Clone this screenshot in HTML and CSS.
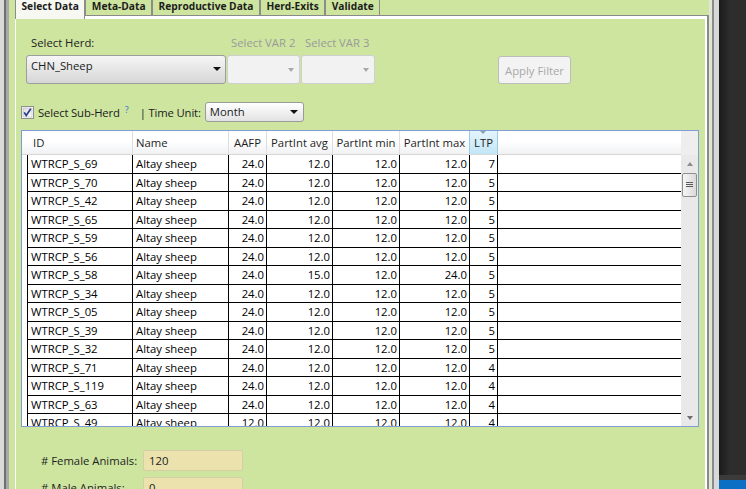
FILE: index.html
```html
<!DOCTYPE html>
<html>
<head>
<meta charset="utf-8">
<link rel="stylesheet" href="styles.css">
</head>
<body>
<div class="screen">
  <div class="frame-left"></div>
  <div class="app">
    <div class="tabs">
      <div class="tab active">Select Data</div>
      <div class="tab">Meta-Data</div>
      <div class="tab">Reproductive Data</div>
      <div class="tab">Herd-Exits</div>
      <div class="tab">Validate</div>
    </div>
    <div class="panel">
      <div class="filter-row">
        <div class="field field-herd">
          <div class="label label-herd">Select Herd:</div>
          <div class="combo combo-main"><span class="combo-text">CHN_Sheep</span><span class="arrow"></span></div>
        </div>
        <div class="field field-var2">
          <div class="label label-muted">Select VAR 2</div>
          <div class="combo combo-disabled"><span class="arrow arrow-light"></span></div>
        </div>
        <div class="field field-var3">
          <div class="label label-muted">Select VAR 3</div>
          <div class="combo combo-disabled"><span class="arrow arrow-light"></span></div>
        </div>
        <div class="btn-apply">Apply Filter</div>
      </div>

      <div class="sub-row">
        <svg class="checkbox" width="13" height="13" viewBox="0 0 13 13">
          <defs>
            <linearGradient id="cbg" x1="0" y1="0" x2="1" y2="1">
              <stop offset="0" stop-color="#dcdcdc"/>
              <stop offset="1" stop-color="#ffffff"/>
            </linearGradient>
          </defs>
          <rect x="0.5" y="0.5" width="12" height="12" fill="#fff" stroke="#8e8f8f"/>
          <rect x="2" y="2" width="9" height="9" fill="url(#cbg)" stroke="#b5b5b5" stroke-width="0.6"/>
          <path d="M3.2 6.4 L5.2 9.4 L9.8 2.8" fill="none" stroke="#2a3c8c" stroke-width="1.7"/>
        </svg>
        <span class="sub-label">Select Sub-Herd</span>
        <span class="help">?</span>
        <span class="time-label">| Time Unit:</span>
        <div class="combo combo-month"><span class="combo-text">Month</span><span class="arrow"></span></div>
      </div>

      <div class="table">
        <div class="grid">
          <div class="thead">
            <div class="th th-id">ID</div>
            <div class="th">Name</div>
            <div class="th th-num">AAFP</div>
            <div class="th th-num">PartInt avg</div>
            <div class="th th-num">PartInt min</div>
            <div class="th th-num">PartInt max</div>
            <div class="th th-num th-sorted">LTP</div>
            <div class="th th-fill"></div>
          </div>
          <div class="tbody">
            <div class="tr"><div class="gut"></div><div class="td">WTRCP_S_69</div><div class="td">Altay sheep</div><div class="td num">24.0</div><div class="td num">12.0</div><div class="td num">12.0</div><div class="td num">12.0</div><div class="td num">7</div><div class="td fill"></div></div>
            <div class="tr"><div class="gut"></div><div class="td">WTRCP_S_70</div><div class="td">Altay sheep</div><div class="td num">24.0</div><div class="td num">12.0</div><div class="td num">12.0</div><div class="td num">12.0</div><div class="td num">5</div><div class="td fill"></div></div>
            <div class="tr"><div class="gut"></div><div class="td">WTRCP_S_42</div><div class="td">Altay sheep</div><div class="td num">24.0</div><div class="td num">12.0</div><div class="td num">12.0</div><div class="td num">12.0</div><div class="td num">5</div><div class="td fill"></div></div>
            <div class="tr"><div class="gut"></div><div class="td">WTRCP_S_65</div><div class="td">Altay sheep</div><div class="td num">24.0</div><div class="td num">12.0</div><div class="td num">12.0</div><div class="td num">12.0</div><div class="td num">5</div><div class="td fill"></div></div>
            <div class="tr"><div class="gut"></div><div class="td">WTRCP_S_59</div><div class="td">Altay sheep</div><div class="td num">24.0</div><div class="td num">12.0</div><div class="td num">12.0</div><div class="td num">12.0</div><div class="td num">5</div><div class="td fill"></div></div>
            <div class="tr"><div class="gut"></div><div class="td">WTRCP_S_56</div><div class="td">Altay sheep</div><div class="td num">24.0</div><div class="td num">12.0</div><div class="td num">12.0</div><div class="td num">12.0</div><div class="td num">5</div><div class="td fill"></div></div>
            <div class="tr"><div class="gut"></div><div class="td">WTRCP_S_58</div><div class="td">Altay sheep</div><div class="td num">24.0</div><div class="td num">15.0</div><div class="td num">12.0</div><div class="td num">24.0</div><div class="td num">5</div><div class="td fill"></div></div>
            <div class="tr"><div class="gut"></div><div class="td">WTRCP_S_34</div><div class="td">Altay sheep</div><div class="td num">24.0</div><div class="td num">12.0</div><div class="td num">12.0</div><div class="td num">12.0</div><div class="td num">5</div><div class="td fill"></div></div>
            <div class="tr"><div class="gut"></div><div class="td">WTRCP_S_05</div><div class="td">Altay sheep</div><div class="td num">24.0</div><div class="td num">12.0</div><div class="td num">12.0</div><div class="td num">12.0</div><div class="td num">5</div><div class="td fill"></div></div>
            <div class="tr"><div class="gut"></div><div class="td">WTRCP_S_39</div><div class="td">Altay sheep</div><div class="td num">24.0</div><div class="td num">12.0</div><div class="td num">12.0</div><div class="td num">12.0</div><div class="td num">5</div><div class="td fill"></div></div>
            <div class="tr"><div class="gut"></div><div class="td">WTRCP_S_32</div><div class="td">Altay sheep</div><div class="td num">24.0</div><div class="td num">12.0</div><div class="td num">12.0</div><div class="td num">12.0</div><div class="td num">5</div><div class="td fill"></div></div>
            <div class="tr"><div class="gut"></div><div class="td">WTRCP_S_71</div><div class="td">Altay sheep</div><div class="td num">24.0</div><div class="td num">12.0</div><div class="td num">12.0</div><div class="td num">12.0</div><div class="td num">4</div><div class="td fill"></div></div>
            <div class="tr"><div class="gut"></div><div class="td">WTRCP_S_119</div><div class="td">Altay sheep</div><div class="td num">24.0</div><div class="td num">12.0</div><div class="td num">12.0</div><div class="td num">12.0</div><div class="td num">4</div><div class="td fill"></div></div>
            <div class="tr"><div class="gut"></div><div class="td">WTRCP_S_63</div><div class="td">Altay sheep</div><div class="td num">24.0</div><div class="td num">12.0</div><div class="td num">12.0</div><div class="td num">12.0</div><div class="td num">4</div><div class="td fill"></div></div>
            <div class="tr"><div class="gut"></div><div class="td">WTRCP_S_49</div><div class="td">Altay sheep</div><div class="td num">12.0</div><div class="td num">12.0</div><div class="td num">12.0</div><div class="td num">12.0</div><div class="td num">4</div><div class="td fill"></div></div>
          </div>
        </div>
        <div class="vscroll">
          <div class="vs-head"></div>
          <div class="vs-btn"><span class="tri-up"></span></div>
          <div class="vs-thumb">
            <svg width="7" height="6" viewBox="0 0 7 6"><path d="M0 0.5H7M0 2.5H7M0 4.5H7" stroke="#5a5a5a" stroke-width="1"/></svg>
          </div>
          <div class="vs-track"></div>
          <div class="vs-btn"><span class="tri-down"></span></div>
        </div>
      </div>

      <div class="stat-row stat-first">
        <span class="stat-label"># Female Animals:</span>
        <div class="stat-box">120</div>
      </div>
      <div class="stat-row">
        <span class="stat-label"># Male Animals:</span>
        <div class="stat-box">0</div>
      </div>
    </div>
  </div>
  <div class="frame-right"></div>
  <div class="desk">
    <div class="taskbar"></div>
  </div>
</div>
</body>
</html>
```
FILE: styles.css
```css
html, body {
  margin: 0;
  padding: 0;
}
body {
  font-family: "Open Sans", "Noto Sans", sans-serif;
  font-size: 11.3px;
  color: #1b1b1b;
  background: #2a2a2a;
}
.screen {
  display: flex;
  width: 746px;
  height: 489px;
  overflow: hidden;
}
.frame-left {
  width: 10px;
  flex: none;
  background: linear-gradient(to right, #dadada 0 4px, #6f6f6f 4px 6px, #a9a9a9 6px 9px, #cee5a0 9px);
}
.app {
  width: 699px;
  flex: none;
  box-sizing: border-box;
  padding-left: 5px;
  background: #cee5a0;
  display: flex;
  flex-direction: column;
}
.frame-right {
  width: 10px;
  flex: none;
  background: linear-gradient(to right, #dfe6d6 0 3px, #8b8b8b 3px 5px, #d8d8d8 5px);
}
.desk {
  flex: 1;
  background: linear-gradient(to right, #1b1b1b, #2d2d2d 11px);
  display: flex;
  flex-direction: column;
  justify-content: flex-end;
}
.taskbar {
  height: 9px;
  border-top: 5px solid #3b3b3b;
  background: #0b6fc4;
}

/* tabs */
.tabs {
  display: flex;
  height: 15px;
  flex: none;
}
.tab {
  height: 15px;
  box-sizing: border-box;
  padding: 0 5.5px;
  border-left: 1px solid #8c8c8c;
  border-right: 1px solid #8c8c8c;
  font-weight: bold;
  font-size: 10.2px;
  line-height: 13px;
  color: #1c1c1c;
  white-space: nowrap;
}
.tab.active {
  position: relative;
  z-index: 1;
  height: 19px;
  background: #f6f8f1;
}

/* panel */
.panel {
  flex: 1;
  border-top: 1px solid #8a8a8a;
  border-right: 2px solid #8a8a8a;
  box-shadow: inset 1px 3px 0 #fff, inset -2px 0 0 #fff;
  padding: 19px 0 0 6px;
  display: flex;
  flex-direction: column;
}
.filter-row {
  display: flex;
  align-items: flex-end;
  height: 49px;
}
.field {
  display: flex;
  flex-direction: column;
}
.field-herd {
  margin-left: 5px;
  width: 200px;
}
.field-var2 {
  margin-left: 1px;
  width: 73px;
}
.field-var3 {
  margin-left: 1px;
  width: 74px;
}
.label {
  height: 16px;
  line-height: 16px;
  margin-bottom: 4px;
  white-space: nowrap;
  padding-left: 4px;
}
.label-herd {
  padding-left: 5px;
  color: #222;
}
.label-muted {
  color: #9a9a9a;
}
.combo {
  box-sizing: border-box;
  display: flex;
  justify-content: space-between;
  border-radius: 3px;
}
.combo-main {
  height: 29px;
  border: 1px solid #9d9d9d;
  background: linear-gradient(to bottom, #f6f6f6, #d6d6d6);
  padding: 2px 4px 0 4px;
  line-height: 16px;
}
.combo-main .arrow {
  margin-top: 9px;
}
.combo-disabled {
  height: 29px;
  border: 1px solid #cfcfcf;
  background: #f2f2f2;
  justify-content: flex-end;
  padding: 0 5px;
}
.combo-disabled .arrow {
  margin-top: 12px;
}
.arrow {
  width: 0;
  height: 0;
  border-left: 4px solid transparent;
  border-right: 4px solid transparent;
  border-top: 4px solid #111;
}
.arrow-light {
  border-left-width: 3.5px;
  border-right-width: 3.5px;
  border-top-color: #a8a8a8;
}
.btn-apply {
  margin-left: 123px;
  width: 73px;
  height: 28px;
  box-sizing: border-box;
  border: 1px solid #bcbcbc;
  border-radius: 3px;
  background: #f3f3f3;
  color: #a8a8a8;
  display: flex;
  align-items: center;
  justify-content: center;
  white-space: nowrap;
}

/* sub-herd row */
.sub-row {
  margin-top: 18px;
  height: 20px;
  display: flex;
  align-items: center;
}
.checkbox {
  flex: none;
}
.sub-label {
  margin-left: 4px;
  letter-spacing: -0.15px;
}
.help {
  margin-left: 5px;
  font-size: 9px;
  color: #3a6fd8;
  align-self: flex-start;
  margin-top: 1px;
}
.time-label {
  margin-left: 11px;
  letter-spacing: -0.15px;
}
.combo-month {
  margin-left: 4px;
  width: 99px;
  height: 20px;
  border: 1px solid #9b9b9b;
  background: linear-gradient(to bottom, #ffffff, #e2e2e2);
  padding: 0 5px 0 4px;
  align-items: center;
  line-height: 18px;
}

/* table */
.table {
  margin-top: 8px;
  width: 678px;
  height: 297px;
  box-sizing: border-box;
  border: 1px solid #7f9fd3;
  background: #fff;
  display: flex;
  flex: none;
}
.grid {
  flex: 1;
  display: flex;
  flex-direction: column;
  overflow: hidden;
}
.thead, .tr {
  display: grid;
  grid-template-columns: 6px 105px 96px 38px 66px 67px 70px 28px 1fr;
}
.thead {
  height: 24px;
  flex: none;
  box-sizing: border-box;
  border-bottom: 1px solid #d7d7d7;
  background: linear-gradient(to bottom, #ffffff 45%, #f0f1f3);
}
.th {
  border-right: 1px solid #dedede;
  line-height: 23px;
  padding-left: 3px;
  white-space: nowrap;
  color: #1e1e1e;
}
.th-id {
  grid-column: span 2;
  padding-left: 11px;
}
.th-num {
  padding-left: 0;
  text-align: center;
}
.th-sorted {
  position: relative;
  background: linear-gradient(to bottom, #e4f5fd, #c3e6f7);
  border-right-color: #98cbe6;
  box-shadow: -1px 0 0 #98cbe6;
}
.th-sorted::before {
  content: "";
  position: absolute;
  left: 10px;
  top: 0;
  border-left: 3.5px solid transparent;
  border-right: 3.5px solid transparent;
  border-top: 3px solid #8aa3b5;
}
.th-fill {
  border-right: none;
}
.tbody {
  flex: 1;
  overflow: hidden;
}
.tr {
  height: 18.5px;
}
.gut {
  border-right: 1px solid #000;
}
.td {
  border-right: 1px solid #000;
  border-bottom: 1px solid #000;
  padding-left: 3px;
  line-height: 17.5px;
  white-space: nowrap;
  overflow: hidden;
  color: #000;
}
.td.num {
  padding-left: 0;
  padding-right: 2px;
  text-align: right;
}
.td.fill {
  border-right: none;
}

/* scrollbar */
.vscroll {
  width: 17px;
  flex: none;
  background: #e9e9e9;
  display: flex;
  flex-direction: column;
}
.vs-head {
  height: 24px;
  background: #eeeeee;
}
.vs-btn {
  height: 17px;
  display: flex;
  align-items: center;
  justify-content: center;
}
.tri-up {
  border-left: 3.5px solid transparent;
  border-right: 3.5px solid transparent;
  border-bottom: 4px solid #8c8c8c;
}
.tri-down {
  border-left: 3.5px solid transparent;
  border-right: 3.5px solid transparent;
  border-top: 4px solid #6f6f6f;
}
.vs-thumb {
  margin: 1px 1px 0 1px;
  height: 24px;
  box-sizing: border-box;
  border: 1px solid #8e8f8f;
  border-radius: 2px;
  background: linear-gradient(to right, #f5f5f5, #dadada);
  display: flex;
  align-items: center;
  justify-content: center;
}
.vs-track {
  flex: 1;
}

/* stats */
.stat-row {
  display: flex;
  align-items: center;
  margin-top: 6px;
  height: 21px;
  flex: none;
}
.stat-first {
  margin-top: 23px;
}
.stat-label {
  margin-left: 20px;
  width: 102px;
  white-space: nowrap;
  color: #1e1e1e;
}
.stat-box {
  width: 100px;
  height: 21px;
  box-sizing: border-box;
  border: 1px solid #d5cfa6;
  border-radius: 2px;
  background: #ebe2ad;
  padding-left: 5px;
  line-height: 19px;
  color: #1e1e1e;
}
```
